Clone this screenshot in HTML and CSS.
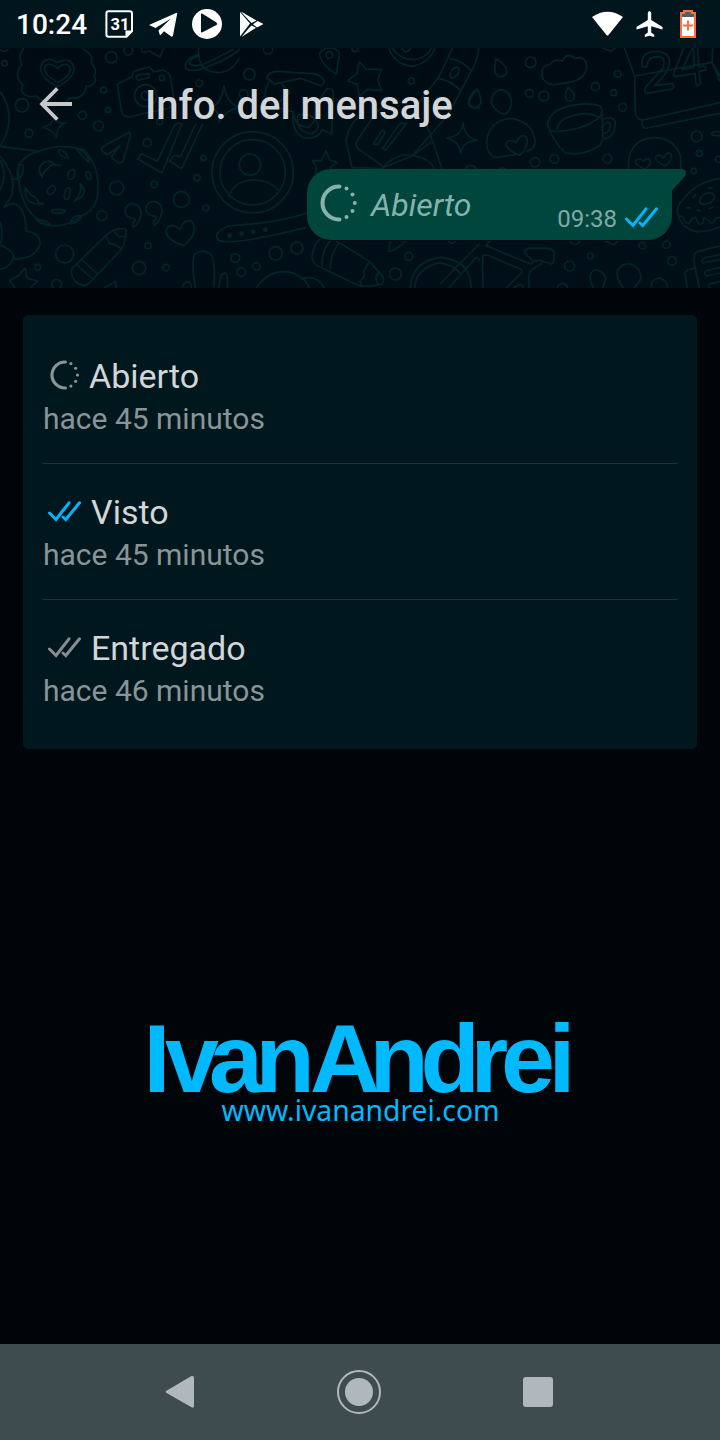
FILE: index.html
```html
<!DOCTYPE html>
<html lang="es">
<head>
<meta charset="utf-8">
<title>Info. del mensaje</title>
<link rel="stylesheet" href="styles.css">
</head>
<body>
<div class="screen">
  <header class="status">
    <span class="clock">10:24</span>
    <svg class="status-left" width="160" height="32" viewBox="104 8 160 32">
      <path d="M108.500 11.200H129.500Q132 11.200 132 13.500V31L126.500 36.800H109Q106.400 36.800 106.400 34.500V13.500Q106.400 11.200 108.500 11.200Z" fill="none" stroke="#fff" stroke-width="2"/>
      <path d="M125.500 37V30.500H132Z" fill="#fff"/>
      <text class="calendar-day" x="110.500" y="30">31</text>
      <path d="M149 25L176 13Q177.600 12.400 177 14.500L173 35.500Q172.500 37.500 170.500 36L164 31.200L160 35.500L158.500 30.500L171 18.500L155.500 28Z" fill="#fff"/>
      <circle cx="207" cy="24" r="15" fill="#fff"/>
      <path d="M201 14.500Q201 13 202.500 13.800L216.500 22.500Q218 24 216.500 25L202.500 32.200Q201 33 201 31.500Z" fill="#00161c"/>
      <path d="M240 12L250 23.500L240 36.500Z M241 11.500L256.500 20.500L251.500 23L242 13Z M251.500 25.500L256 27.800L241.500 37L249 28Z M257.500 21L263.500 24L257 27.500L253 24.200Z" fill="#fff"/>
    </svg>
    <svg class="status-right" width="106" height="32" viewBox="592 8 106 32">
      <path d="M592 17Q607.500 6.500 623 17L608.500 35Q607.500 36.200 606.500 35Z" fill="#fff"/>
      <path d="M647.800 13Q649.500 8.800 651.200 13V20L662.500 27V29.600L651.200 26.200V32.500L654.200 34.800V37L649.500 35.700L644.800 37V34.800L647.800 32.500V26.200L636.500 29.600V27L647.800 20Z" fill="#fff"/>
      <path d="M684 11H692V13H695V37H681V13H684Z" fill="#fff" stroke="#ff6e40" stroke-width="2"/>
      <path d="M685 12H691V14H694V17H682V14H685Z" fill="#535f60"/>
      <path d="M683 25.500H693M688 20.500V30.500" stroke="#ff6e40" stroke-width="2"/>
    </svg>
  </header>

  <section class="hero">
    <svg class="wallpaper" width="720" height="240" viewBox="0 12 2160 720">
      <g>
        <path d="M72 12C52 35 62 48 66 62C45 85 52 110 69 122C55 145 78 164 108 156C126 178 142 164 155 176C180 186 198 178 208 162C239 168 258 148 258 127C286 128 291 105 282 96C294 78 279 65 274 56C282 30 260 27 248 12"/>
        <path d="M172 128C140 111 120 92 122 70C127 45 151 38 172 56C199 39 220 52 222 75C221 96 201 114 172 128ZM173 116C148 101 132 88 133 73C138 58 155 55 173 74C192 53 211 62 211 77C209 94 193 106 173 116Z"/>
        <path d="M0 16Q12 28 26 15M424 12Q423 26 431 25L449 21L480 40L490 12"/>
        <path d="M352 120L396 98L400 82L448 69L462 84L488 78Q508 84 511 98L523 172Q518 188 504 193L385 219Q369 218 364 201ZM409 97Q406 104 416 108L444 102Q452 96 446 89L418 92Z"/>
        <circle cx="437" cy="155" r="33"/><circle cx="437" cy="155" r="13"/><circle cx="486" cy="102" r="8"/>
        <path d="M596 31Q548 48 558 73Q576 90 638 62Q688 43 720 15M596 12Q590 66 630 82Q688 97 718 43M600 34Q560 50 570 60Q589 73 632 51L702 15"/>
        <path d="M164 217Q158 244 128 249Q158 257 169 279Q171 244 198 237Q170 241 164 217ZM672 124Q665 181 632 190Q666 207 657 234Q676 197 720 190Q680 180 672 124Z"/>
        <path d="M386 265Q392 264 391 275L368 353Q362 359 353 356L334 339L360 305L322 333L306 320Q303 313 309 308Z"/>
        <path d="M413 344L424 329L472 352L524 243Q530 234 544 239Q547 242 541 251L486 387ZM588 238L542 337L522 334L509 351L543 373L548 368L608 240"/>
        <path d="M0 142Q48 208 12 286L0 307L116 322Q180 297 252 317Q298 370 294 430Q295 496 244 516Q205 548 151 546Q106 532 79 488Q50 435 56 362Q80 328 116 322M0 336Q57 405 31 462L12 490Q55 457 74 520L80 562Q121 567 120 602Q102 650 37 643M0 347Q24 390 0 436M0 603Q59 624 30 660Q15 676 0 675M0 534Q12 570 2 600M38 408Q52 400 60 415"/>
        <path d="M127 401Q110 375 124 362Q151 341 161 362L181 365Q151 359 145 372Q127 384 127 401ZM76 430Q91 456 105 459L119 479H130Q87 485 76 456ZM175 318Q193 315 206 342Q178 341 175 318ZM229 314Q263 322 267 354Q239 331 229 314ZM54 408Q47 363 68 362Q75 389 54 408ZM109 525Q152 532 151 544Q118 544 109 525ZM210 540Q216 511 244 516Q241 533 210 540Z"/>
        <ellipse cx="214" cy="391" rx="10" ry="15" transform="rotate(24 214 391)"/><ellipse cx="154" cy="438" rx="10" ry="15" transform="rotate(38 154 438)"/><ellipse cx="202" cy="449" rx="8" ry="18" transform="rotate(14 202 449)"/><ellipse cx="266" cy="395" rx="7" ry="12" transform="rotate(-15 266 395)"/><ellipse cx="175" cy="502" rx="20" ry="6"/>
        <path d="M240 419Q266 446 236 464L224 471Q248 447 240 419Z"/>
        <path d="M364 554Q377 552 378 560Q378 594 363 618L265 720Q248 731 225 711Q209 690 216 674L318 574Q342 554 364 554ZM316 575L328 598L345 602L366 615M343 563L357 578L373 577M228 660L279 706M242 644L292 690"/>
        <path d="M399 551Q394 543 405 528L404 524Q381 524 374 503Q378 480 398 479Q425 484 423 510Q419 538 399 551ZM462 545Q457 537 468 521L467 517Q444 517 437 496Q441 473 461 472Q488 477 486 503Q482 531 462 545Z"/>
        <path d="M551 605Q503 589 498 564Q502 541 525 546L540 556Q550 527 573 530Q594 551 572 584Z"/>
        <path d="M75 671L82 703L113 711L90 732M75 671L57 694L29 709L45 732M311 732L346 713L349 732M586 732Q574 660 582 632Q609 610 636 634Q648 670 641 730M547 732Q550 710 568 714Q576 725 574 732M655 732L664 693Q678 680 682 697V732"/>
        <circle cx="334" cy="40" r="17"/><circle cx="385" cy="20" r="13"/><circle cx="14" cy="58" r="8"/><circle cx="66" cy="184" r="20"/><circle cx="311" cy="138" r="9"/><circle cx="324" cy="198" r="8"/><circle cx="247" cy="214" r="12"/><circle cx="295" cy="246" r="15"/><circle cx="87" cy="268" r="12"/><circle cx="442" cy="296" r="12"/><circle cx="598" cy="118" r="10"/><circle cx="610" cy="342" r="8"/><circle cx="591" cy="401" r="9"/><circle cx="350" cy="432" r="21"/><circle cx="462" cy="421" r="10"/><circle cx="544" cy="466" r="24"/><circle cx="618" cy="492" r="9"/><circle cx="306" cy="515" r="15"/><circle cx="194" cy="630" r="27"/><circle cx="444" cy="605" r="9"/><circle cx="417" cy="672" r="20"/><circle cx="498" cy="671" r="10"/><circle cx="113" cy="670" r="9"/><circle cx="170" cy="721" r="15"/><circle cx="706" cy="642" r="13"/><circle cx="479" cy="233" r="9"/>
      </g>
      <g transform="translate(720 0)">
        <circle cx="38" cy="385" r="122"/><circle cx="38" cy="385" r="98"/><circle cx="30" cy="362" r="32"/>
        <path d="M-34 460Q-20 409 42 408Q92 407 117 442M202 506Q110 538 -35 546Q-86 568 -63 589Q-30 607 200 550"/>
        <circle class="dot" cx="-31" cy="575" r="7"/><circle class="dot" cx="5" cy="569" r="7"/><circle class="dot" cx="39" cy="563" r="7"/><circle class="dot" cx="76" cy="557" r="7"/>
        <path d="M238 31Q246 12 268 12Q292 12 298 28L289 91Q246 65 238 31Z"/><circle cx="268" cy="33" r="10"/>
        <path d="M358 53L378 75L424 77L413 108L424 139L382 136L359 157L351 121L323 110L350 90Z"/>
        <path d="M80 102Q84 85 109 82L206 88Q245 88 253 113Q249 130 230 121L180 103L101 121L91 107ZM91 107Q69 142 78 166L103 188L150 145L125 121M103 188L160 204Q163 248 205 250Q242 220 235 172L260 135Q283 130 280 154L275 270L247 257Q230 290 188 280Q153 260 160 204M173 240Q180 262 214 270Q237 260 235 240Q215 200 173 215Z"/>
        <path d="M446 12Q463 61 518 67Q567 57 586 12M456 12Q488 55 535 45Q568 32 573 12M486 12Q496 36 512 12"/>
        <path d="M638 12L594 103Q530 180 515 215M716 12Q713 53 690 88L624 213L516 336L432 370L354 314Q342 300 356 283L410 204L442 180M628 43Q672 52 694 81M594 103Q638 111 660 139M638 103Q625 98 635 80Q645 67 655 70Q663 90 638 103ZM400 300L426 259Q438 260 433 270L413 302ZM427 314L480 238L500 237L438 318Z"/>
        <path d="M374 205Q330 230 318 290L336 370L426 374Q474 320 526 336Q578 348 583 378M564 252L607 378M576 292L516 336M558 232L564 252"/>
        <path d="M712 134Q693 157 685 177Q690 197 720 191"/>
        <path d="M669 237Q664 279 621 282Q660 293 662 328Q669 291 711 289Q673 279 669 237Z"/>
        <path d="M258 320L269 348L292 356L270 370L276 392L252 382L226 394L229 369L217 350L244 349Z"/>
        <path d="M241 584Q220 600 216 640Q220 662 242 670L354 724Q384 731 425 720Q435 710 428 697L388 652L288 590M275 586Q244 620 246 665M298 594Q270 629 271 678M388 652Q378 668 370 684Q377 700 360 710L366 726M416 687Q401 698 414 721"/>
        <path d="M452 585L446 622Q468 621 501 587M511 732Q516 650 604 640Q673 648 690 701L694 732M524 732Q527 672 601 656Q650 668 661 690M600 720L720 597M626 732L700 650Q710 632 720 650M48 732Q96 665 165 689Q200 706 208 732M185 703Q235 692 252 732"/>
        <circle cx="28" cy="91" r="17"/><circle cx="84" cy="16" r="14"/><circle cx="11" cy="150" r="13"/><circle cx="514" cy="111" r="9"/><circle cx="107" cy="628" r="20"/><circle cx="171" cy="612" r="18"/><circle cx="49" cy="667" r="11"/><circle cx="4" cy="684" r="13"/><circle cx="506" cy="637" r="12"/><circle cx="466" cy="690" r="18"/><circle cx="635" cy="588" r="10"/><circle cx="345" cy="14" r="9"/><circle cx="692" cy="382" r="18"/>
      </g>
      <g transform="translate(1440 0)">
        <path d="M48 44Q42 78 46 88Q62 109 80 88Q87 69 48 44ZM-9 136Q-35 152 -34 178Q-18 203 3 178Q3 154 -9 136Z"/>
        <path d="M211 60Q180 66 186 100Q204 130 242 119Q321 113 320 64Q314 33 285 44Q265 21 247 51Q223 43 211 60Z"/>
        <path d="M264 130Q248 162 263 170Q281 176 283 154Q278 140 264 130ZM75 211Q49 206 34 178Q34 141 62 137Q97 145 94 178Q91 202 75 211Z"/>
        <path d="M46 341Q16 328 21 287Q30 230 91 223Q156 230 166 292Q161 321 138 322M46 341L105 332M118 334Q82 319 78 300Q86 282 108 296Q121 268 138 279Q151 307 118 334Z"/>
        <path d="M203 244Q204 204 260 188Q320 172 360 186Q377 208 347 228Q292 266 210 261ZM229 257Q237 222 287 213Q332 202 354 220M203 244Q218 291 256 327Q306 337 359 305L369 287Q366 208 366 201M366 228Q398 212 406 234Q405 284 369 285M366 250Q382 226 391 240Q390 269 369 268Z"/>
        <path d="M433 12L464 96L466 211Q472 228 489 228L720 176M463 96L696 55L720 96M698 12L696 55L720 112M484 228L489 249Q493 254 501 252L720 208"/>
        <path d="M486 66Q482 23 528 22Q569 24 569 55Q567 83 524 125L577 118Q586 129 576 135L500 148Q490 145 498 128L548 73Q561 40 533 38Q504 38 502 63Q498 75 486 66ZM611 12L580 91L584 98L645 88L648 121Q654 130 661 120L658 82L677 78Q679 68 671 66L656 69L653 12M638 12L606 77L643 70L640 12"/>
        <path d="M446 376Q440 300 502 283Q578 270 602 338V376M494 376Q462 360 466 350Q480 339 490 352Q505 337 512 350Q511 366 494 376ZM555 366Q522 350 527 338Q539 327 550 342Q562 320 573 330Q579 350 555 366Z"/>
        <path d="M720 404Q654 411 609 466Q588 490 593 507Q604 554 650 563Q688 564 720 548M597 517Q610 511 614 530Q628 550 633 526L646 520L656 539Q672 545 671 521L684 527Q698 551 706 523L720 520M638 462L648 451M617 492L632 491M650 496L662 502M684 432L698 431M685 495L700 489"/>
        <ellipse cx="681" cy="464" rx="24" ry="15" transform="rotate(-28 681 464)"/>
        <path d="M30 590L18 605L152 660Q168 643 191 653L216 660Q227 649 221 620L207 613L145 613Q130 617 135 627L160 653M10 732Q5 642 10 634L22 633L122 676Q130 681 122 690L78 732M187 657L154 678Q142 690 148 732M100 732Q116 719 128 724V732"/>
        <path d="M340 732Q320 688 344 678Q368 678 378 704L368 732M430 732Q408 704 412 680Q427 655 454 660Q488 676 481 708L463 732M514 732Q510 708 537 702Q563 708 562 732M370 588L402 603L416 588M368 12L392 22L406 12"/>
        <path d="M720 606L654 622Q640 628 641 649L658 732M720 632L674 642Q659 652 670 657L720 647M720 671L682 679Q667 687 680 696L720 687M720 713L690 719Q680 726 690 732M645 672L623 678Q611 684 616 696L622 732"/>
        <circle cx="152" cy="55" r="16"/><circle cx="148" cy="148" r="12"/><circle cx="192" cy="156" r="15"/><circle cx="346" cy="128" r="12"/><circle cx="413" cy="90" r="10"/><circle cx="401" cy="146" r="9"/><circle cx="428" cy="190" r="12"/><circle cx="165" cy="355" r="14"/><circle cx="223" cy="345" r="13"/><circle cx="382" cy="344" r="13"/><circle cx="650" cy="277" r="16"/><circle cx="658" cy="328" r="9"/><circle cx="641" cy="381" r="8"/><ellipse cx="713" cy="269" rx="18" ry="6"/><circle cx="715" cy="346" r="9"/><circle cx="487" cy="605" r="10"/><circle cx="559" cy="602" r="11"/><circle cx="576" cy="651" r="13"/><circle cx="331" cy="636" r="9"/><circle cx="269" cy="666" r="15"/><circle cx="285" cy="585" r="16"/><circle cx="247" cy="733" r="15"/><circle cx="66" cy="388" r="16"/>
      </g>
    </svg>
    <div class="toolbar">
      <svg class="back" width="34" height="34" viewBox="0 0 34 34"><path d="M33 17H4M18.300 1.500L3 17L18.300 32.500" fill="none" stroke="#c6c9cc" stroke-width="3.800"/></svg>
      <h1 class="title">Info. del mensaje</h1>
    </div>
    <div class="bubble">
      <svg class="bubble-shape" width="380" height="73" viewBox="0 0 380 73"><path class="shade" d="M24 1H365V46Q365 72 341 72H24Q0 72 0 46Z"/><path d="M24 0H375Q381 1 378 7L365 21.500V47A24 24 0 0 1 341 71H24A24 24 0 0 1 0 47V24A24 24 0 0 1 24 0Z"/></svg>
      <svg class="opened" width="38" height="38" viewBox="0 0 38 38"><path d="M19.500 2.500H19A16.500 16.500 0 0 0 19 35.500H19.500"/><g><circle cx="26.500" cy="4.500" r="2"/><circle cx="32.500" cy="10.500" r="2"/><circle cx="34.800" cy="19" r="2"/><circle cx="32.500" cy="27" r="2"/><circle cx="26.500" cy="33" r="2"/></g></svg>
      <span class="bubble-text">Abierto</span>
      <span class="bubble-time">09:38</span>
      <svg class="ticks blue" width="33" height="21" viewBox="0 0 33 21"><path d="M1.500 12L8 18.500L21 1.800M15 16L17.800 18.500L31.500 1.800"/></svg>
    </div>
  </section>

  <main class="card">
    <div class="row">
      <div class="row-head"><svg class="opened small" width="30" height="30" viewBox="0 0 38 38"><path d="M19.500 2.500H19A16.500 16.500 0 0 0 19 35.500H19.500"/><g><circle cx="26.500" cy="4.500" r="2"/><circle cx="32.500" cy="10.500" r="2"/><circle cx="34.800" cy="19" r="2"/><circle cx="32.500" cy="27" r="2"/><circle cx="26.500" cy="33" r="2"/></g></svg><span>Abierto</span></div>
      <div class="row-time">hace 45 minutos</div>
    </div>
    <div class="row">
      <div class="row-head"><svg class="ticks blue" width="33" height="21" viewBox="0 0 33 21"><path d="M1.500 12L8 18.500L21 1.800M15 16L17.800 18.500L31.500 1.800"/></svg><span>Visto</span></div>
      <div class="row-time">hace 45 minutos</div>
    </div>
    <div class="row">
      <div class="row-head"><svg class="ticks" width="33" height="21" viewBox="0 0 33 21"><path d="M1.500 12L8 18.500L21 1.800M15 16L17.800 18.500L31.500 1.800"/></svg><span>Entregado</span></div>
      <div class="row-time">hace 46 minutos</div>
    </div>
  </main>

  <svg class="brand" width="440" height="120" viewBox="140 1010 440 120">
    <text class="brand-name" y="1092" x="143.500 165 209 255.500 310 369.500 420.500 470.500 501 548.500">IvanAndrei</text>
    <text class="brand-url" x="221.500" y="1121" textLength="278" lengthAdjust="spacingAndGlyphs">www.ivanandrei.com</text>
  </svg>

  <nav class="navbar">
    <svg width="30" height="34" viewBox="0 0 30 34"><path d="M1 16L26 1.200Q29 0.200 29 3V31Q29 33.500 26.500 32.300L1.500 18Q0 17 1 16Z"/></svg>
    <svg width="44" height="44" viewBox="0 0 44 44"><circle cx="22" cy="22" r="21" class="ring"/><circle cx="22" cy="22" r="14"/></svg>
    <svg width="30" height="30" viewBox="0 0 30 30"><rect width="30" height="30" rx="3"/></svg>
  </nav>
</div>
</body>
</html>
```
FILE: styles.css
```css
body { margin: 0; background: #000509; font-family: Roboto, sans-serif; }
.screen { width: 720px; height: 1440px; display: flex; flex-direction: column; overflow: hidden; background: #000509; }
svg { display: block; flex: none; }
.status { height: 48px; flex: none; display: flex; align-items: center; padding: 0 22px 0 16px; box-sizing: border-box; background: #00161c; color: #fff; }
.clock { width: 88px; font-size: 28px; font-weight: 500; line-height: 32px; padding-top: 2px; }
.status-right { margin-left: auto; }
.calendar-day { font: 700 16.5px Roboto, sans-serif; fill: #fff; }
.hero { position: relative; height: 240px; flex: none; display: flex; flex-direction: column; background: #000f17; }
.wallpaper { position: absolute; inset: 0; fill: none; stroke: #03252a; stroke-width: 5; stroke-linejoin: round; background: linear-gradient(#000a12, #000f17 45%); }
.wallpaper .dot { fill: #03252a; stroke: none; }
.toolbar { position: relative; height: 112px; display: flex; align-items: center; padding-left: 39px; }
.title { margin: 4px 0 0 72px; font-size: 40px; line-height: 48px; font-weight: 500; color: #d3d6d9; }
.bubble { position: relative; width: 365px; height: 71px; margin: 9px 0 0 307px; padding: 0 14px 0 13px; box-sizing: border-box; display: flex; align-items: center; }
.bubble-shape { position: absolute; left: 0; top: 0; fill: #00463d; }
.bubble-shape .shade { fill: #000a10; }
.bubble > :not(.bubble-shape) { position: relative; }
.opened { color: #86b1ac; fill: none; stroke: currentColor; stroke-width: 4; stroke-linecap: round; }
.opened g { fill: currentColor; stroke: none; }
.bubble .opened { margin-top: -3px; }
.bubble-text { margin-left: 13px; font-size: 32px; line-height: 40px; font-style: italic; color: #86b1ac; }
.bubble-time { margin: 29px 8px 0 auto; font-size: 24px; line-height: 28px; color: #80aaa4; }
.bubble .ticks { margin-top: 26px; }
.ticks { fill: none; stroke: #868d8f; stroke-width: 3; stroke-linecap: round; }
.ticks.blue { stroke: #00b5fb; }
.card { width: 674px; height: 434px; flex: none; margin: 27px 0 0 23px; padding: 13px 20px; box-sizing: border-box; border-radius: 5px; background: #00171e; }
.row { height: 136px; box-sizing: border-box; padding-top: 28px; border-bottom: 1px solid #1f3237; }
.row:last-child { border: 0; }
.row-head { height: 40px; display: flex; align-items: center; gap: 10px; padding-left: 5px; font-size: 34px; line-height: 40px; color: #d2d6d8; }
.row-head .opened { color: #8b9496; margin: 0 -1px 2px 2px; }
.row-head .ticks { margin-top: -2px; }
.row-time { margin-top: 5px; font-size: 30px; line-height: 36px; color: #8a9496; }
.brand { margin: 261px 0 0 140px; fill: #00b9ff; }
.brand-name { font: 700 97px "Liberation Sans", Arial, sans-serif; }
.brand-url { font: 400 29px "Noto Sans", sans-serif; }
.navbar { height: 96px; flex: none; margin-top: auto; padding: 0 167px 0 165px; display: flex; align-items: center; justify-content: space-between; background: #3e4b4f; fill: #b1b8bb; }
.navbar .ring { fill: none; stroke: #b1b8bb; stroke-width: 2; }
```
